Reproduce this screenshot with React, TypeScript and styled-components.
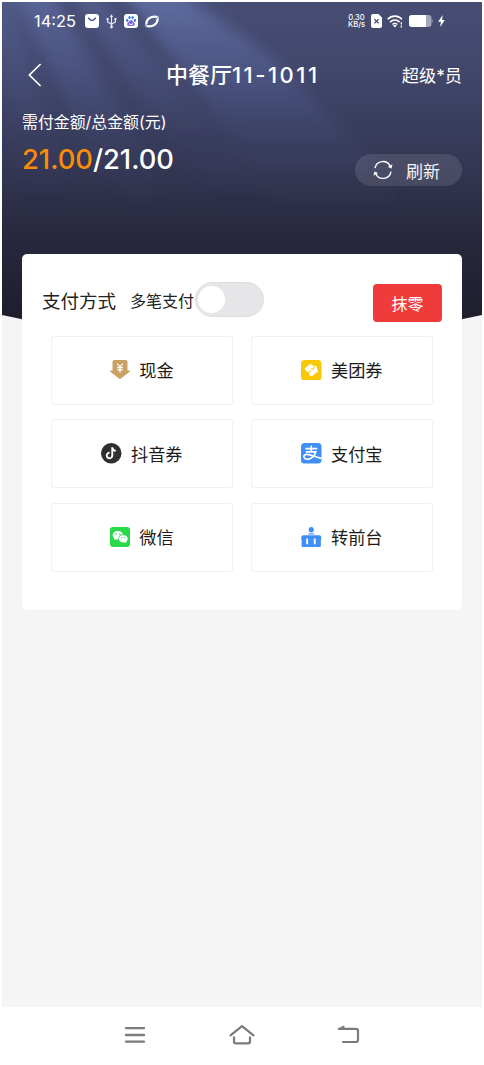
import React from 'react';
import styled, { createGlobalStyle } from 'styled-components';

const GlobalStyle = createGlobalStyle`
  * { box-sizing: border-box; }
  body {
    margin: 0;
    background: #fff;
    font-family: Inter, "Noto Sans CJK SC", sans-serif;
    color: #222;
  }
  button { font: inherit; border: 0; margin: 0; padding: 0; background: none; color: inherit; }
  svg { display: block; flex: none; }
`;

const Page = styled.div`
  width: 484px;
  height: 1065px;
  padding: 2px 2px 0;
  overflow: hidden;
  display: flex;
  flex-direction: column;
`;

const Screen = styled.main`
  height: 1005px;
  background: #f5f5f5;
`;

const Hero = styled.header`
  position: relative;
  isolation: isolate;
  height: 252px;
  color: #fff;
`;

const HeroBackdrop = styled.svg`
  position: absolute;
  left: 0;
  top: 0;
  z-index: -1;
`;

const StatusBar = styled.div`
  height: 38px;
  padding: 0 37px 0 32px;
  display: flex;
  align-items: center;
  justify-content: space-between;
`;

const StatusGroup = styled.div<{ $gap: number }>`
  display: flex;
  align-items: center;
  gap: ${p => p.$gap}px;
`;

const Clock = styled.time`
  width: 44px;
  font-size: 16.4px;
  line-height: 20px;
`;

const NetSpeed = styled.div`
  width: 17px;
  font-size: 7.6px;
  line-height: 7px;
  font-weight: 500;
  text-align: center;
  white-space: nowrap;
  margin-right: 1px;
`;

const TitleBar = styled.div`
  height: 70px;
  padding: 0 20px 0 21px;
  display: grid;
  grid-template-columns: 80px 1fr 80px;
  align-items: center;
`;

const BackButton = styled.button`
  padding-left: 5px;
`;

const Title = styled.h1`
  margin: 0 2px 0 0;
  font-size: 22px;
  line-height: 32px;
  font-weight: 500;
  text-align: center;
  white-space: nowrap;
`;

const TableNumber = styled.span`
  letter-spacing: 2.5px;
  margin-right: -2.5px;
`;

const UserName = styled.span`
  padding-top: 1px;
  font-size: 17.2px;
  line-height: 26px;
  text-align: right;
  white-space: nowrap;
`;

const Summary = styled.div`
  display: flex;
  justify-content: space-between;
  padding: 0 20px;
`;

const AmountLabel = styled.div`
  font-size: 15.9px;
  line-height: 25px;
`;

const Amount = styled.div`
  margin-top: 8px;
  font-size: 27.3px;
  line-height: 34px;
  font-weight: 500;
  white-space: nowrap;
`;

const Due = styled.span`
  color: #fb8c08;
`;

const RefreshButton = styled.button`
  width: 107px;
  height: 32px;
  margin-top: 44px;
  border-radius: 16px;
  background: rgba(255, 255, 255, 0.11);
  display: flex;
  align-items: center;
  padding-left: 17px;
  gap: 12px;
  font-size: 17px;
  color: #f4f4f8;
`;

const Card = styled.section`
  position: relative;
  height: 356px;
  margin: 0 20px;
  padding: 28px 20px 0;
  border-radius: 5px;
  background: #fff;
`;

const CardHead = styled.div`
  height: 53.5px;
  display: flex;
  align-items: flex-start;
`;

const Heading = styled.h2`
  margin: 0 14px 0 0;
  font-size: 18.5px;
  line-height: 38px;
  font-weight: 400;
`;

const SwitchLabel = styled.span`
  font-size: 16px;
  line-height: 38px;
`;

const Switch = styled.button`
  width: 69px;
  height: 35px;
  margin-left: 1px;
  padding: 3px 2px;
  border-radius: 18px;
  background: #e6e6e8;
  border: 1px solid #dedee0;
`;

const Knob = styled.span`
  display: block;
  width: 27px;
  height: 27px;
  border-radius: 50%;
  background: #fff;
`;

const RoundOffButton = styled.button`
  width: 69px;
  height: 38px;
  margin: 2px 0 0 auto;
  border-radius: 4px;
  background: #ef3b3a;
  color: #fff;
  font-size: 16px;
`;

const Methods = styled.div`
  display: grid;
  grid-template-columns: 182px 182px;
  grid-auto-rows: 69px;
  gap: 14.6px 18px;
  padding-left: 9px;
`;

const Method = styled.button`
  display: flex;
  align-items: center;
  justify-content: center;
  gap: 9px;
  border: 1.5px solid #f1f1f1;
  border-radius: 3px;
  font-size: 17.2px;
  color: #1e1c1a;
`;

const MethodName = styled.span`
  padding-bottom: 1px;
`;

const SystemNav = styled.nav`
  height: 55px;
  padding: 0 122px;
  display: flex;
  align-items: center;
  justify-content: space-between;
`;

const Backdrop = () => (
  <HeroBackdrop width="480" height="330" viewBox="0 0 480 330">
    <defs>
      <clipPath id="curve">
        <path d="M0 0H480V313Q240 366 0 313Z" />
      </clipPath>
      <linearGradient id="night" x1="0" y1="0" x2="0" y2="1">
        <stop offset="0" stopColor="#474d74" />
        <stop offset=".22" stopColor="#41466a" />
        <stop offset=".5" stopColor="#343753" />
        <stop offset=".72" stopColor="#27283d" />
        <stop offset="1" stopColor="#1c1c2a" />
      </linearGradient>
      <linearGradient id="beam" gradientUnits="userSpaceOnUse" x1="0" y1="0" x2="0" y2="220">
        <stop offset="0" stopColor="#6a7cb8" stopOpacity=".62" />
        <stop offset=".3" stopColor="#6072b0" stopOpacity=".36" />
        <stop offset=".6" stopColor="#5060a0" stopOpacity=".13" />
        <stop offset=".8" stopColor="#5060a0" stopOpacity=".04" />
        <stop offset="1" stopColor="#4a5a98" stopOpacity="0" />
      </linearGradient>
      <filter id="soft" x="-20%" y="-20%" width="140%" height="140%">
        <feGaussianBlur stdDeviation="7" />
      </filter>
    </defs>
    <g clipPath="url(#curve)">
      <rect width="480" height="330" fill="url(#night)" />
      <g fill="url(#beam)" filter="url(#soft)">
        <path d="M106 -30L150 -30L270 55L400 190L400 240L300 240L200 95Z" />
        <path d="M55 -30L75 -30L320 240L230 240Z" opacity=".5" />
        <path d="M0 -30L38 -30L195 240L130 240Z" opacity=".8" />
        <path d="M-20 -30L0 -30L90 240L20 240Z" opacity=".5" />
      </g>
    </g>
  </HeroBackdrop>
);

const BagIcon = () => (
  <svg width="14" height="14" viewBox="0 0 14 14">
    <rect width="14" height="14" rx="3" fill="#fff" />
    <path d="M3.6 4.2Q7 8.6 10.4 4.2" fill="none" stroke="#4b5380" strokeWidth="1.5" strokeLinecap="round" />
  </svg>
);

const UsbIcon = () => (
  <svg width="11" height="15" viewBox="0 0 11 15" fill="none" stroke="#e8eaf4" strokeWidth="1.2">
    <path d="M5.5 2V13M1.6 5.5V8L5.5 10.3L9.4 8V5.5" />
    <path d="M3.8 3L5.5 .3L7.2 3ZM.6 4h2v2H.6zM8.4 4h2v2H8.4z" fill="#e8eaf4" stroke="none" />
    <circle cx="5.5" cy="13" r="1.4" fill="#e8eaf4" stroke="none" />
  </svg>
);

const PawIcon = () => (
  <svg width="14" height="14" viewBox="0 0 14 14">
    <rect width="14" height="14" rx="3" fill="#fff" />
    <g fill="#3c7df0">
      <ellipse cx="3.2" cy="6.3" rx="1.2" ry="1.6" />
      <ellipse cx="5.5" cy="3.5" rx="1.2" ry="1.6" />
      <ellipse cx="8.6" cy="3.5" rx="1.2" ry="1.6" />
      <ellipse cx="10.9" cy="6.3" rx="1.2" ry="1.6" />
    </g>
    <path d="M7 6C5.6 6 5.2 7.5 3.9 8.6C2.5 9.8 3 12 5 12H9C11 12 11.5 9.8 10.1 8.6C8.8 7.5 8.4 6 7 6Z" fill="#7a69e6" />
    <path d="M5.5 9.2v1.4h3V9.2" stroke="#fff" strokeWidth=".8" fill="none" />
  </svg>
);

const OrbitIcon = () => (
  <svg width="14" height="13" viewBox="0 0 14 13" fill="none" stroke="#fff" strokeLinecap="round">
    <path d="M1.4 8.6C1.3 4 6.2 .9 11.2 1.8" strokeWidth="2.2" />
    <path d="M12.6 4.2C12.7 8.8 7.6 12.2 2.8 11.2" strokeWidth="2.2" />
    <path d="M11.2 1.8C13.6 .6 13.8 1.6 12.7 4M2.6 11.2C.4 12.4 .2 11.2 1.2 8.8" strokeWidth="1" />
  </svg>
);

const SimIcon = () => (
  <svg width="11" height="14" viewBox="0 0 11 14">
    <path d="M2 0H7.4L11 3.4V12a2 2 0 0 1-2 2H2a2 2 0 0 1-2-2V2a2 2 0 0 1 2-2Z" fill="#fff" />
    <path d="M3.4 5.2L7.6 9.4M7.6 5.2L3.4 9.4" stroke="#454b73" strokeWidth="1.3" />
  </svg>
);

const WifiIcon = () => (
  <svg width="17" height="13" viewBox="0 0 17 13" fill="none" stroke="#fff" strokeWidth="1.6">
    <path d="M.7 4.3C4.7.1 11 .1 15 4.3M3.1 7.1C5.8 4.3 9.9 4.3 12.6 7.1M5.4 9.5C6.9 8 8.8 8 10.3 9.5" />
    <path d="M6 10.5Q7.8 9 9.7 10.5L7.9 12.6Z" fill="#fff" stroke="none" />
    <path d="M14.3 7.2V9.6M14.3 10.5V12.6" strokeWidth="1.3" />
  </svg>
);

const BatteryIcon = () => (
  <svg width="24" height="12" viewBox="0 0 24 12">
    <rect width="22.5" height="12" rx="3.2" fill="#a4a7ba" />
    <path d="M3.2 0H17V12H3.2A3.2 3.2 0 0 1 0 8.8V3.2A3.2 3.2 0 0 1 3.2 0Z" fill="#fff" />
    <path d="M23 4Q24.4 6 23 8Z" fill="#a4a7ba" />
  </svg>
);

const BoltIcon = () => (
  <svg width="7" height="12" viewBox="0 0 7 12">
    <path d="M4.6 0L.2 6.7H2.9L2.2 12L6.8 5H4.1Z" fill="#fff" />
  </svg>
);

const BackIcon = () => (
  <svg width="14" height="24" viewBox="0 0 14 24" fill="none" stroke="#fff" strokeWidth="1.7">
    <path d="M12.6 1L1.4 12L12.6 23" />
  </svg>
);

const RefreshIcon = () => (
  <svg width="22" height="20" viewBox="0 0 22 20" fill="none" stroke="#fff" strokeWidth="1.4">
    <path d="M3 8.1A8 8 0 0 1 18.3 6.6M19 11.7A8 8 0 0 1 3.7 13.4" />
    <path d="M20.5 4.2L19.5 8.4L15.9 6.9ZM1.5 15.8L2.4 11.6L6.1 13.1Z" fill="#fff" stroke="none" />
  </svg>
);

const CashIcon = () => (
  <svg width="20" height="20" viewBox="0 0 20 20">
    <path d="M4.5 0H15.5A2 2 0 0 1 17.5 2V10.6H19Q20.3 11 19.4 12L11 18.6Q10 19.4 9 18.6L.6 12Q-.3 11 1 10.6H2.5V2A2 2 0 0 1 4.5 0Z" fill="#c8a163" />
    <path d="M7.2 3.7L10 7L12.8 3.7M10 7V12.5M7.2 7.6H12.8M7.2 9.9H12.8" fill="none" stroke="#fff" strokeWidth="1.3" />
  </svg>
);

const MeituanIcon = () => (
  <svg width="20.5" height="20.5" viewBox="0 0 20 20">
    <rect width="20" height="20" rx="3.5" fill="#f8c808" />
    <path d="M3.5 8.2L9.4 3.7L12.3 6L14.7 5.4L16.7 11.1L10.2 16L8.2 14.3L7.5 11.8L5.6 11.4Z" fill="#fff" />
    <path d="M13.3 6.6L11.4 9.4M9.8 10.8L7.4 12.1" stroke="#f8c808" strokeWidth="1" fill="none" />
    <path d="M9.3 8.3L11 8.7L10.5 10.3" stroke="#f8c808" strokeWidth=".6" fill="none" />
  </svg>
);

const DouyinIcon = () => (
  <svg width="20.5" height="20.5" viewBox="0 0 20 20">
    <circle cx="10" cy="10" r="10" fill="#302f32" />
    <path d="M11 4.2V12.1A2.7 2.7 0 1 1 8.3 9.5M11 4.5Q11.5 7.4 14.5 7.7" fill="none" stroke="#fff" strokeWidth="1.9" />
  </svg>
);

const AlipayIcon = () => (
  <svg width="20.5" height="20.5" viewBox="0 0 20 20">
    <rect width="20" height="20" rx="3.5" fill="#3f8ff4" />
    <path d="M4.2 5.5H15.9M10 2.7V8.6M4.8 8.6H14.5C13.5 12.3 10 16.1 5.8 15.9C2.5 15.7 1.6 12.1 4.7 11.2C8.4 10.2 12.8 13.5 20 15" fill="none" stroke="#fff" strokeWidth="1.6" />
  </svg>
);

const WechatIcon = () => (
  <svg width="20" height="20" viewBox="0 0 20 20">
    <rect width="20" height="20" rx="3" fill="#28d94a" />
    <path d="M8 4C4.9 4 2.7 5.8 2.7 8.2C2.7 9.6 3.4 10.8 4.6 11.5L4.2 13.2L6.2 12.2Q7.2 12.5 8.3 12.4A4.3 4.3 0 0 1 13 7.4C12.6 5.4 10.6 4 8 4Z" fill="#fff" />
    <path d="M13.2 8.1C10.7 8.1 8.8 9.7 8.8 11.8C8.8 13.9 10.7 15.5 13.2 15.5Q14 15.5 14.8 15.3L16.5 16.2L16.1 14.7C17.1 14 17.7 13 17.7 11.8C17.7 9.7 15.7 8.1 13.2 8.1Z" fill="#fff" />
    <g fill="#28d94a">
      <circle cx="6.3" cy="7" r=".7" />
      <circle cx="9.8" cy="7" r=".7" />
      <circle cx="11.7" cy="10.7" r=".6" />
      <circle cx="14.8" cy="10.7" r=".6" />
    </g>
  </svg>
);

const DeskIcon = () => (
  <svg width="20.5" height="20.5" viewBox="0 0 20 20">
    <circle cx="10" cy="2.6" r="2.5" fill="#3f8ff4" />
    <path d="M6.6 7.2Q7 5.9 10 5.9Q13 5.9 13.4 7.2Z" fill="#3f8ff4" opacity=".8" />
    <path d="M2.5 8H17.5A2.3 2.3 0 0 1 19.8 10.3V12.3H19.4V17.7A2.3 2.3 0 0 1 17.1 20H2.9A2.3 2.3 0 0 1 .6 17.7V12.3H.2V10.3A2.3 2.3 0 0 1 2.5 8Z" fill="#3f8ff4" />
    <path d="M6 11.3V16.8M13.4 11.3V16.8" stroke="#fff" strokeWidth="1.8" />
  </svg>
);

const MenuIcon = () => (
  <svg width="22" height="18" viewBox="0 0 22 18" stroke="#7b7b7b" strokeWidth="2.3" strokeLinecap="round">
    <path d="M2 2.2H20M2 9H20M2 15.7H20" />
  </svg>
);

const HomeIcon = () => (
  <svg width="26" height="22" viewBox="0 0 26 22" fill="none" stroke="#7b7b7b" strokeWidth="2.2" strokeLinecap="round" strokeLinejoin="round">
    <path d="M1.5 11.3L13 2.2L24.5 11.3" />
    <path d="M5 13.3V17.5Q5 19.3 6.8 19.3H19.2Q21 19.3 21 17.5V13.3" />
  </svg>
);

const ReturnIcon = () => (
  <svg width="23" height="20" viewBox="0 0 23 20" fill="none" stroke="#7b7b7b" strokeWidth="2.2" strokeLinecap="round" strokeLinejoin="round">
    <path d="M2 3.8H18.8Q21 3.8 21 6V15Q21 17 18.8 17H6" />
    <path d="M2 3.8L6.7 1.3V3.8Z" fill="#7b7b7b" strokeWidth="1.5" />
  </svg>
);

const methods = [
  { label: '现金', Icon: CashIcon },
  { label: '美团券', Icon: MeituanIcon },
  { label: '抖音券', Icon: DouyinIcon },
  { label: '支付宝', Icon: AlipayIcon },
  { label: '微信', Icon: WechatIcon },
  { label: '转前台', Icon: DeskIcon },
];

export default function App() {
  return (
    <Page>
      <GlobalStyle />
      <Screen>
        <Hero>
          <Backdrop />
          <StatusBar>
            <StatusGroup $gap={7}>
              <Clock>14:25</Clock>
              <BagIcon />
              <UsbIcon />
              <PawIcon />
              <OrbitIcon />
            </StatusGroup>
            <StatusGroup $gap={5}>
              <NetSpeed>0.30<br />KB/s</NetSpeed>
              <SimIcon />
              <WifiIcon />
              <BatteryIcon />
              <BoltIcon />
            </StatusGroup>
          </StatusBar>
          <TitleBar>
            <BackButton><BackIcon /></BackButton>
            <Title>中餐厅<TableNumber>11-1011</TableNumber></Title>
            <UserName>超级*员</UserName>
          </TitleBar>
          <Summary>
            <div>
              <AmountLabel>需付金额/总金额(元)</AmountLabel>
              <Amount><Due>21.00</Due>/21.00</Amount>
            </div>
            <RefreshButton>
              <RefreshIcon />
              刷新
            </RefreshButton>
          </Summary>
        </Hero>
        <Card>
          <CardHead>
            <Heading>支付方式</Heading>
            <SwitchLabel>多笔支付</SwitchLabel>
            <Switch role="switch" aria-checked={false}><Knob /></Switch>
            <RoundOffButton>抹零</RoundOffButton>
          </CardHead>
          <Methods>
            {methods.map(({ label, Icon }) => (
              <Method key={label}>
                <Icon />
                <MethodName>{label}</MethodName>
              </Method>
            ))}
          </Methods>
        </Card>
      </Screen>
      <SystemNav>
        <MenuIcon />
        <HomeIcon />
        <ReturnIcon />
      </SystemNav>
    </Page>
  );
}
